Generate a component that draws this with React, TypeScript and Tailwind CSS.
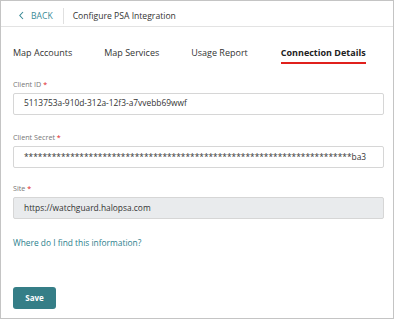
import React from "react";

export default function App() {
  const font = { fontFamily: '"Open Sans", "Liberation Sans", sans-serif' };
  return (
    <div style={font} className="w-[394px] h-[319px] bg-white border border-[#c4c4c4] flex flex-col text-[#333]">
      <div className="h-[26px] shrink-0 border-b border-[#e3e3e3] flex items-center pl-[17px] pt-[5px]">
        <div className="flex items-center gap-[6px] text-[#3a8a96] text-[8.6px]">
          <svg width="7" height="9" viewBox="0 0 7 9"><path d="M5 1 L1.8 4.5 L5 8" fill="none" stroke="#3a8a96" strokeWidth="1.1" /></svg>
          <span>BACK</span>
        </div>
        <div className="w-px h-[16px] bg-[#e0e0e0] ml-[10px] mr-[9px]" />
        <span className="text-[8.6px] text-[#333]">Configure PSA Integration</span>
      </div>
      <div className="flex items-end pl-[12px] mt-[19px] text-[9px] text-[#333] whitespace-nowrap shrink-0">
        <div className="pb-[4px]">Map Accounts</div>
        <div className="pb-[4px] ml-[32px]">Map Services</div>
        <div className="pb-[4px] ml-[32px]">Usage Report</div>
        <div className="pb-[2px] ml-[33px] font-bold text-[#222] border-b-2 border-[#e0201c]">Connection Details</div>
      </div>
      <div className="flex flex-col pl-[12px] pr-[9px] mt-[17px]">
        <label className="text-[7.2px] text-[#777] leading-none">Client ID <span className="text-[#e0201c]">*</span></label>
        <div className="mt-[5px] h-[22px] border border-[#d6d6d6] rounded-[2px] flex items-center pl-[10px] text-[8.4px] text-[#333]">5113753a-910d-312a-12f3-a7vvebb69wwf</div>
        <label className="mt-[19px] text-[7.2px] text-[#777] leading-none">Client Secret <span className="text-[#e0201c]">*</span></label>
        <div className="mt-[5px] h-[22px] border border-[#d6d6d6] rounded-[2px] flex items-center pl-[10px] text-[8.4px] text-[#333] overflow-hidden whitespace-nowrap">{"*".repeat(71)}ba3</div>
        <label className="mt-[17px] text-[7.2px] text-[#777] leading-none">Site <span className="text-[#e0201c]">*</span></label>
        <div className="mt-[5px] h-[22px] border border-[#d6d6d6] bg-[#e9ebed] rounded-[2px] flex items-center pl-[10px] text-[8.4px] text-[#333]">https://watchguard.halopsa.com</div>
        <a className="mt-[18px] text-[8.4px] text-[#2b7f8e]">Where do I find this information?</a>
        <div className="mt-[33px]">
          <button className="w-[43px] h-[22px] bg-[#357e87] rounded-[3px] text-white text-[8px] font-bold">Save</button>
        </div>
      </div>
    </div>
  );
}
